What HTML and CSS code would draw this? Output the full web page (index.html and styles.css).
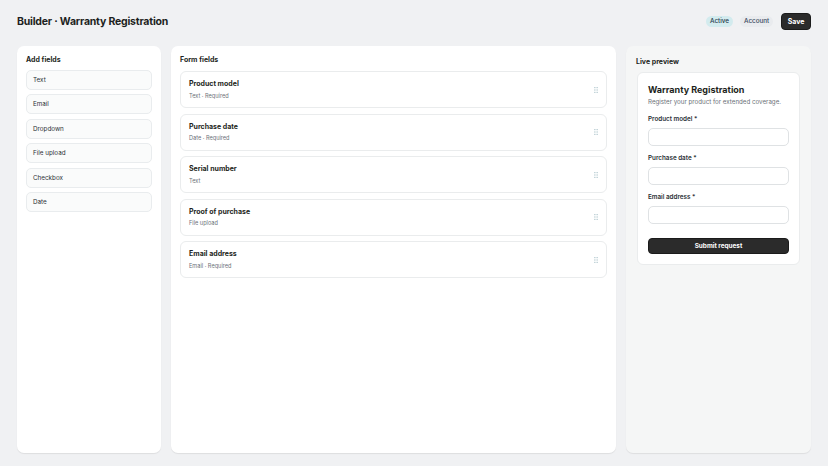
FILE: index.html
```html
<!DOCTYPE html>
<html lang="en">
<head>
  <meta charset="UTF-8" />
  <title>Builder · Warranty Registration</title>
  <link rel="stylesheet" href="styles.css">
</head>
<body>

  <header class="topbar">
    <h1>Builder · Warranty Registration</h1>
    <div class="actions">
      <span class="pill pill-active">Active</span>
      <span class="pill">Account</span>
      <button class="btn-save">Save</button>
    </div>
  </header>

  <main class="workspace">
    <!-- palette of field types -->
    <section class="panel palette">
      <h2>Add fields</h2>
      <ul class="field-types">
        <li>Text</li>
        <li>Email</li>
        <li>Dropdown</li>
        <li>File upload</li>
        <li>Checkbox</li>
        <li>Date</li>
      </ul>
    </section>

    <!-- fields currently in the form -->
    <section class="panel fields">
      <h2>Form fields</h2>
      <div class="field-card">
        <div>
          <h3>Product model</h3>
          <p>Text · Required</p>
        </div>
        <svg class="handle" viewBox="0 0 4 6" width="4" height="6"><rect x="0" y="0" width="1.6" height="1.2"/><rect x="2.4" y="0" width="1.6" height="1.2"/><rect x="0" y="2.4" width="1.6" height="1.2"/><rect x="2.4" y="2.4" width="1.6" height="1.2"/><rect x="0" y="4.8" width="1.6" height="1.2"/><rect x="2.4" y="4.8" width="1.6" height="1.2"/></svg>
      </div>
      <div class="field-card">
        <div>
          <h3>Purchase date</h3>
          <p>Date · Required</p>
        </div>
        <svg class="handle" viewBox="0 0 4 6" width="4" height="6"><rect x="0" y="0" width="1.6" height="1.2"/><rect x="2.4" y="0" width="1.6" height="1.2"/><rect x="0" y="2.4" width="1.6" height="1.2"/><rect x="2.4" y="2.4" width="1.6" height="1.2"/><rect x="0" y="4.8" width="1.6" height="1.2"/><rect x="2.4" y="4.8" width="1.6" height="1.2"/></svg>
      </div>
      <div class="field-card">
        <div>
          <h3>Serial number</h3>
          <p>Text</p>
        </div>
        <svg class="handle" viewBox="0 0 4 6" width="4" height="6"><rect x="0" y="0" width="1.6" height="1.2"/><rect x="2.4" y="0" width="1.6" height="1.2"/><rect x="0" y="2.4" width="1.6" height="1.2"/><rect x="2.4" y="2.4" width="1.6" height="1.2"/><rect x="0" y="4.8" width="1.6" height="1.2"/><rect x="2.4" y="4.8" width="1.6" height="1.2"/></svg>
      </div>
      <div class="field-card">
        <div>
          <h3>Proof of purchase</h3>
          <p>File upload</p>
        </div>
        <svg class="handle" viewBox="0 0 4 6" width="4" height="6"><rect x="0" y="0" width="1.6" height="1.2"/><rect x="2.4" y="0" width="1.6" height="1.2"/><rect x="0" y="2.4" width="1.6" height="1.2"/><rect x="2.4" y="2.4" width="1.6" height="1.2"/><rect x="0" y="4.8" width="1.6" height="1.2"/><rect x="2.4" y="4.8" width="1.6" height="1.2"/></svg>
      </div>
      <div class="field-card">
        <div>
          <h3>Email address</h3>
          <p>Email · Required</p>
        </div>
        <svg class="handle" viewBox="0 0 4 6" width="4" height="6"><rect x="0" y="0" width="1.6" height="1.2"/><rect x="2.4" y="0" width="1.6" height="1.2"/><rect x="0" y="2.4" width="1.6" height="1.2"/><rect x="2.4" y="2.4" width="1.6" height="1.2"/><rect x="0" y="4.8" width="1.6" height="1.2"/><rect x="2.4" y="4.8" width="1.6" height="1.2"/></svg>
      </div>
    </section>

    <!-- rendered form -->
    <section class="panel preview">
      <h2>Live preview</h2>
      <form class="preview-card">
        <h3>Warranty Registration</h3>
        <p class="lead">Register your product for extended coverage.</p>
        <label>Product model *</label>
        <input type="text" />
        <label>Purchase date *</label>
        <input type="text" />
        <label>Email address *</label>
        <input type="text" />
        <button type="button" class="btn-submit">Submit request</button>
      </form>
    </section>
  </main>

</body>
</html>
```

FILE: styles.css
```css
* {
  box-sizing: border-box;
}
html, body {
  height: 100%;
}
body {
  margin: 0;
  padding: 0 17px 13px;
  background: #f0f1f3;
  font-family: Inter, "Noto Sans", sans-serif;
  color: #1d1f21;
  display: flex;
  flex-direction: column;
}
.topbar {
  display: flex;
  align-items: center;
  justify-content: space-between;
  height: 42px;
  padding-top: 1px;
  margin-bottom: 4px;
}
h1 {
  margin: 0;
  font-size: 10.5px;
  letter-spacing: -0.2px;
  font-weight: 700;
  color: #1d1f21;
}
.actions {
  display: flex;
  align-items: center;
  gap: 7px;
}
.pill {
  font-size: 6.3px;
  line-height: 9px;
  font-weight: 500;
  padding: 1px 4px;
  border-radius: 6px;
  background: #e9ebee;
  color: #34465a;
}
.pill-active {
  background: #d3ebee;
  color: #24384a;
}
.btn-save {
  font: inherit;
  font-size: 7px;
  font-weight: 700;
  color: #fff;
  background: #2b2b2b;
  border: 1px solid #1b1b1b;
  border-radius: 4px;
  padding: 0 5.5px;
  height: 17px;
  margin-left: 1px;
}
.workspace {
  flex: 1;
  display: grid;
  grid-template-columns: 144px 1fr 185px;
  gap: 10px;
  min-height: 0;
}
.panel {
  background: #fff;
  border-radius: 7px;
  box-shadow: 0 1px 1px rgba(0, 0, 0, 0.08);
  padding: 9px 9px;
}
.panel h2 {
  margin: 0 0 5px;
  font-size: 7px;
  line-height: 10px;
  font-weight: 700;
  color: #1d1f21;
}
.field-types {
  list-style: none;
  margin: 0;
  padding: 0;
  display: flex;
  flex-direction: column;
  gap: 4.4px;
}
.field-types li {
  height: 20px;
  display: flex;
  align-items: center;
  padding: 0 6px;
  font-size: 6.3px;
  color: #2c3136;
  background: #fafbfb;
  border: 1px solid #e9ecee;
  border-radius: 5px;
}
.fields {
  display: flex;
  flex-direction: column;
}
.fields h2 {
  margin-bottom: 6px;
}
.field-card {
  height: 37px;
  display: flex;
  align-items: center;
  justify-content: space-between;
  padding: 0 8px 0 8px;
  border: 1px solid #eaeced;
  border-radius: 6px;
  margin-bottom: 5.5px;
}
.field-card h3 {
  margin: 0;
  font-size: 7px;
  font-weight: 700;
  line-height: 10px;
  color: #1d1f21;
}
.field-card p {
  margin: 2.5px 0 0;
  font-size: 5.6px;
  line-height: 8px;
  color: #6b7178;
}
.handle {
  fill: #c3d4d9;
}
.preview {
  background: #f5f6f6;
  padding: 11px 10px;
}
.preview h2 {
  margin-bottom: 5px;
}
.preview-card {
  background: #fff;
  border: 1px solid #eaeced;
  border-radius: 6px;
  margin: 0 1px;
  padding: 10px 10px 10px;
  display: flex;
  flex-direction: column;
}
.preview-card h3 {
  margin: 0;
  font-size: 9px;
  line-height: 13px;
  font-weight: 700;
  color: #1d1f21;
}
.lead {
  margin: 1px 0 9px;
  font-size: 6.2px;
  line-height: 9px;
  color: #6b7178;
}
.preview-card label {
  font-size: 6.3px;
  font-weight: 600;
  line-height: 9px;
  color: #2c3136;
  margin-bottom: 4px;
}
.preview-card input {
  height: 18px;
  border: 1px solid #dfe2e4;
  border-radius: 5px;
  margin: 0 0 8px;
  background: #fff;
}
.btn-submit {
  margin-top: 6px;
  height: 16px;
  font: inherit;
  font-size: 6.4px;
  font-weight: 700;
  color: #fff;
  background: #2b2b2b;
  border: 1px solid #1b1b1b;
  border-radius: 4px;
}
```
